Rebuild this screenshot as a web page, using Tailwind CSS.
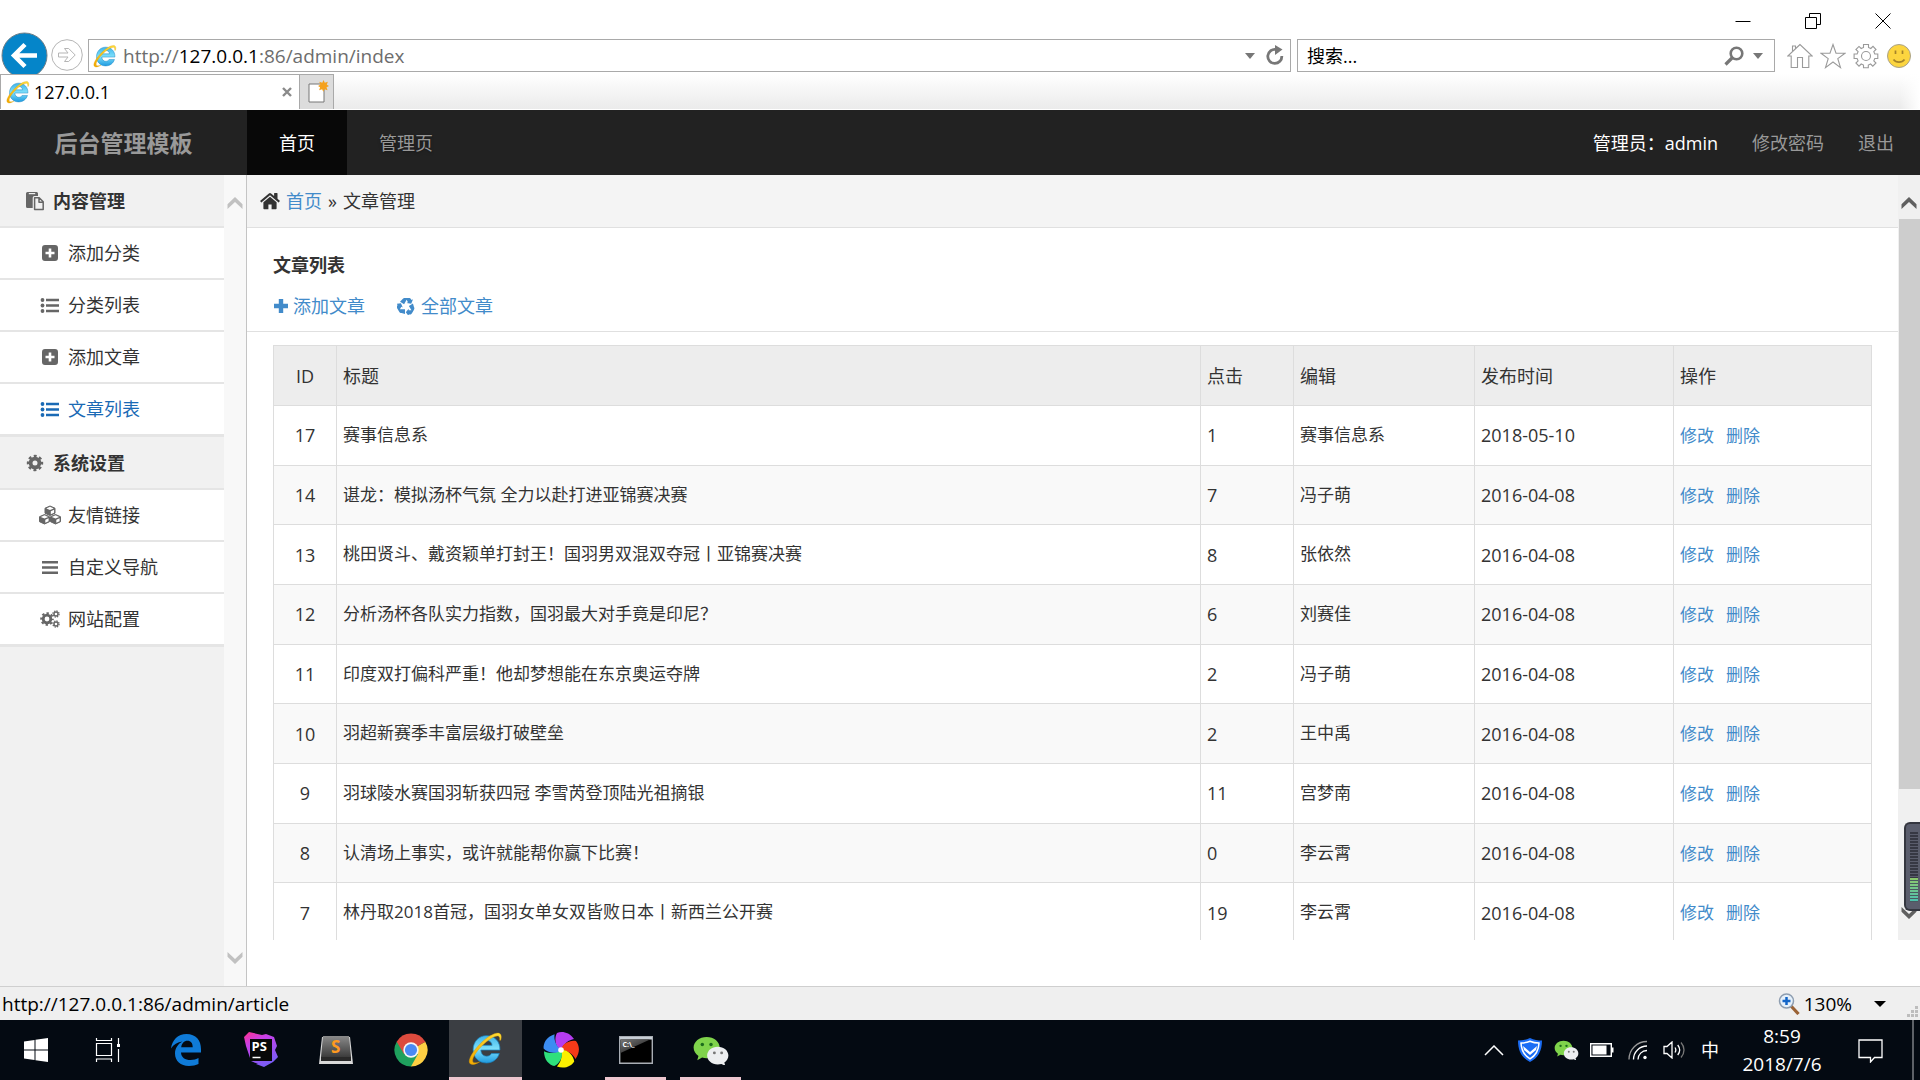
<!DOCTYPE html>
<html lang="zh-CN">
<head>
<meta charset="utf-8">
<title>127.0.0.1</title>
<meta name="viewport" content="width=device-width, initial-scale=1">
<script src="https://cdn.jsdelivr.net/npm/@tailwindcss/browser@4"></script>
</head>
<body class="flex h-screen flex-col overflow-hidden bg-white font-['Open_Sans','Noto_Sans_CJK_SC',sans-serif] text-lg text-[#333]">

<!-- Shared icons -->
<svg class="absolute size-0" aria-hidden="true">
  <defs>
    <linearGradient id="ieBlue" x1="0" y1="0" x2="0" y2="1"><stop offset="0" stop-color="#3fb4ea"/><stop offset=".5" stop-color="#7fe0fb"/><stop offset="1" stop-color="#1f9be0"/></linearGradient>
    <linearGradient id="ieGold" x1="0" y1="1" x2="1" y2="0"><stop offset="0" stop-color="#f3a900"/><stop offset="1" stop-color="#ffdf3a"/></linearGradient>
    <linearGradient id="psGrad" x1="0" y1="0" x2=".5" y2="1"><stop offset="0" stop-color="#ff318c"/><stop offset=".35" stop-color="#c840e8"/><stop offset="1" stop-color="#7b5cf5"/></linearGradient>
    <linearGradient id="sublime" x1="0" y1="0" x2="0" y2="1"><stop offset="0" stop-color="#8a8a8a"/><stop offset="1" stop-color="#3c3c3c"/></linearGradient>
    <linearGradient id="cmdGloss" x1="0" y1="0" x2="1" y2="1"><stop offset="0" stop-color="#777"/><stop offset="1" stop-color="#111"/></linearGradient>
  </defs>
  <symbol id="ie" viewBox="0 0 34 34">
    <path d="M31 18.500H12.500c.2 3.800 2.400 6 5.600 6 2.300 0 3.900-1 4.700-2.600h7.600C28.700 27.500 24 31 18 31 10.300 31 5 25.500 5 18S10.500 4.500 18 4.500 31.500 10 31 18.500zM12.700 13.900h10.700c-.3-2.900-2.200-4.700-5.200-4.700-3 0-5 1.800-5.500 4.700z" fill="url(#ieBlue)" stroke="#1b86c4" stroke-width=".7"/>
    <path d="M31.800 9c.9-3.200.6-5.500-1-6.500C27.600.6 19.500 4.800 12 12.300 4.500 19.800-.2 28 1.600 31.200c1.300 2.300 5 1.600 9.700-1.200-3.300 1.200-5.700 1.300-6.500 0-1.400-2.600 2.300-9.200 8.600-15.500C19.900 8 27.200 3.700 29.700 5c1 .5 1.400 1.900 1 3.900z" fill="url(#ieGold)" stroke="#d69600" stroke-width=".4"/>
  </symbol>
  <symbol id="plus-square" viewBox="0 0 18 18">
    <path fill-rule="evenodd" fill="currentColor" d="M4 1h10a3 3 0 0 1 3 3v10a3 3 0 0 1-3 3H4a3 3 0 0 1-3-3V4a3 3 0 0 1 3-3zm3.700 3.500v3.200H4.500v2.600h3.200v3.200h2.600v-3.200h3.200V7.700h-3.200V4.500z"/>
  </symbol>
  <symbol id="list" viewBox="0 0 20 18">
    <g fill="currentColor"><circle cx="2.500" cy="4" r="1.900"/><circle cx="2.500" cy="9.500" r="1.900"/><circle cx="2.500" cy="15" r="1.900"/><path d="M6 2.800h13v2.400H6zM6 8.300h13v2.400H6zM6 13.800h13v2.400H6z"/></g>
  </symbol>
  <symbol id="cog" viewBox="0 0 18 18">
    <circle cx="9" cy="9" r="4.400" fill="none" stroke="currentColor" stroke-width="3.800"/>
    <circle cx="9" cy="9" r="7" fill="none" stroke="currentColor" stroke-width="2.400" stroke-dasharray="2.950 2.548" stroke-dashoffset="1.475"/>
  </symbol>
  <symbol id="cogs" viewBox="0 0 20 18">
    <g fill="none" stroke="currentColor">
      <circle cx="7" cy="9" r="3.800" stroke-width="2.800"/><circle cx="7" cy="9" r="5.800" stroke-width="2" stroke-dasharray="2.400 2.155" stroke-dashoffset="1.200"/>
      <circle cx="16" cy="4" r="2" stroke-width="1.400"/><circle cx="16" cy="4" r="3.100" stroke-width="1.200" stroke-dasharray="1.400 1.035"/>
      <circle cx="16" cy="14" r="2" stroke-width="1.400"/><circle cx="16" cy="14" r="3.100" stroke-width="1.200" stroke-dasharray="1.400 1.035"/>
    </g>
  </symbol>
  <symbol id="cubes" viewBox="0 0 24 20">
    <g fill="currentColor" stroke="currentColor" stroke-width="1" stroke-linejoin="round">
      <path d="M12 1l5 2.200v5L12 10.500 7 8.200v-5z"/><path d="M6.500 9.500l5 2.200v5l-5 2.300-5-2.300v-5z"/><path d="M17.500 9.500l5 2.200v5l-5 2.300-5-2.300v-5z"/>
    </g>
    <g fill="#fff"><path d="M12 1.800l3.700 1.600L12 5 8.300 3.400zM12.800 6.200l3.300-1.500v3l-3.300 1.500zM6.500 10.300l3.700 1.600-3.700 1.600-3.700-1.600zM7.300 14.700l3.300-1.500v3l-3.300 1.500zM17.500 10.300l3.700 1.600-3.700 1.600-3.700-1.600zM18.300 14.700l3.300-1.500v3l-3.300 1.500z"/></g>
  </symbol>
  <symbol id="bars" viewBox="0 0 18 18"><path fill="currentColor" d="M1 3h16v2.500H1zM1 8.200h16v2.500H1zM1 13.400h16v2.500H1z"/></symbol>
  <symbol id="paste" viewBox="0 0 20 20">
    <path fill="currentColor" d="M1 2.500A1.500 1.500 0 0 1 2.500 1h9.200A1.500 1.500 0 0 1 13 2.500V5H9.500A1.800 1.800 0 0 0 7.700 6.800V17H2.500A1.500 1.500 0 0 1 1 15.500z"/>
    <path d="M3.800 2.600h6.400" stroke="#f1f1f1" stroke-width="1.200"/>
    <path d="M9.600 6.800h4.600l4 4v7.600H9.600zM14 7v4.200h4" fill="none" stroke="currentColor" stroke-width="1.500" stroke-linejoin="round"/>
  </symbol>
  <symbol id="home" viewBox="0 0 20 18">
    <path fill="currentColor" d="M10 4.800l6.600 5.500V16.500a.8.800 0 0 1-.8.800h-4.200v-4.900H8.400v4.900H4.200a.8.800 0 0 1-.8-.8v-6.200zM19.700 9.300l-.8 1a.4.400 0 0 1-.6 0L10 3.300 1.700 10.300a.4.400 0 0 1-.6 0l-.8-1a.4.400 0 0 1 0-.6L8.900 1.500a1.800 1.800 0 0 1 2.200 0l3 2.500V1.500c0-.3.200-.5.400-.5H17c.3 0 .5.200.5.500v5.200l2.300 2z"/>
  </symbol>
  <symbol id="plus" viewBox="0 0 16 16"><path fill="currentColor" d="M5.800 1h4.400v4.800H15v4.400h-4.800V15H5.800v-4.800H1V5.800h4.800z"/></symbol>
  <symbol id="recycle" viewBox="0 0 20 20">
    <g fill="currentColor"><path d="M6 2.600C6.800 1.300 7.600 1 9 1h4.200c1.200 0 1.900.5 2.400 1.400l.6 1 1.600-.9-2 4.900-5.100-.7 1.500-.9-1.500-2.700L7.900 8 3.400 5.400z"/></g>
    <g fill="currentColor" transform="rotate(120 10 10.500)"><path d="M6 2.600C6.800 1.300 7.600 1 9 1h4.200c1.200 0 1.900.5 2.400 1.400l.6 1 1.600-.9-2 4.900-5.100-.7 1.500-.9-1.500-2.700L7.900 8 3.400 5.400z"/></g>
    <g fill="currentColor" transform="rotate(240 10 10.500)"><path d="M6 2.600C6.800 1.300 7.600 1 9 1h4.200c1.200 0 1.900.5 2.400 1.400l.6 1 1.600-.9-2 4.900-5.100-.7 1.500-.9-1.500-2.700L7.900 8 3.400 5.400z"/></g>
  </symbol>
  <symbol id="chev-up" viewBox="0 0 16 14"><path fill="currentColor" d="M8 1l7.500 7.200V13L8 6 .5 13V8.200z"/></symbol>
  <symbol id="wechat" viewBox="0 0 38 30">
    <path d="M14.500 1C7 1 1 5.800 1 12c0 3.600 2 6.600 5 8.700L4.800 25l5-2.700c1.500.4 3 .7 4.700.7 7.500 0 13.500-4.900 13.500-11S22 1 14.500 1z" fill="#7fd34b"/>
    <circle cx="10" cy="8.700" r="1.800" fill="#1c6b1c"/><circle cx="19" cy="8.700" r="1.800" fill="#1c6b1c"/>
    <path d="M26 11c-6.200 0-11 4-11 9.200s4.800 9.200 11 9.200c1.300 0 2.600-.2 3.800-.5l4 2-1-3.400c2.500-1.700 4.200-4.300 4.200-7.300C37 15 32.200 11 26 11z" fill="#eceef0"/>
    <circle cx="22.500" cy="17.500" r="1.500" fill="#777"/><circle cx="30" cy="17.500" r="1.500" fill="#777"/>
  </symbol>
</svg>

<!-- Browser window controls -->
<div class="flex h-8 shrink-0 items-end justify-end pr-[2px]">
  <button class="flex w-[70px] justify-center pb-[3px]" aria-label="最小化"><svg class="size-4" viewBox="0 0 16 16"><path d="M.5 8.500h15" stroke="#000"/></svg></button>
  <button class="flex w-[70px] justify-center pb-[3px]" aria-label="还原"><svg class="size-4" viewBox="0 0 16 16" fill="none" stroke="#000"><path d="M.5 4.500h11v11H.5zM4.500 4V.5h11v11H12"/></svg></button>
  <button class="flex w-[70px] justify-center pb-[3px]" aria-label="关闭"><svg class="size-4" viewBox="0 0 16 16"><path d="M.5.5l15 15M15.500.5l-15 15" stroke="#000"/></svg></button>
</div>

<!-- Address bar -->
<div class="flex h-[42px] shrink-0 items-start overflow-hidden">
  <button class="ml-px w-[47px] shrink-0" aria-label="后退"><svg class="size-[47px]" viewBox="0 0 47 47"><circle cx="23.500" cy="23.500" r="22.500" fill="#0585c9" stroke="#6f7f88"/><path d="M36 23.500H15M24 12.500l-11 11 11 11" fill="none" stroke="#fff" stroke-width="4.500"/></svg></button>
  <button class="ml-[3px] mt-[7px] w-8 shrink-0" aria-label="前进"><svg class="size-8" viewBox="0 0 32 32"><circle cx="16" cy="16" r="15.300" fill="#fff" stroke="#b5b5b5"/><path d="M7.500 14v4h9.500l-3.500 4.500h4.200l6.500-6.500-6.500-6.500h-4.200L17 14z" fill="#fff" stroke="#b5b5b5"/></svg></button>
  <div class="ml-[5px] mt-[7px] flex h-[33px] flex-1 items-center border border-[#a9a9a9] pl-1 pr-1">
    <svg class="mr-[6px] size-6"><use href="#ie"/></svg>
    <p class="flex-1 text-[19px] leading-6 text-[#6d6d6d]">http://<span class="text-black">127.0.0.1</span>:86/admin/index</p>
    <button class="mr-[9px]" aria-label="历史记录"><svg class="h-[6px] w-[10px]" viewBox="0 0 10 6"><path d="M0 0h10L5 6z" fill="#777"/></svg></button>
    <button aria-label="刷新"><svg class="size-[22px]" viewBox="0 0 22 22"><path d="M12 4.500A7 7 0 1 0 17.800 11" fill="none" stroke="#777" stroke-width="2.800"/><path d="M11 0l7.500 4.500L11 10z" fill="#777"/></svg></button>
  </div>
  <div class="ml-[6px] mt-[7px] flex h-[33px] w-[478px] items-center border border-[#a9a9a9] pl-[9px] pr-[11px]">
    <input type="text" aria-label="搜索" placeholder="搜索..." class="min-w-0 flex-1 text-lg leading-6 text-black placeholder:text-black outline-none">
    <button class="mr-[9px]" aria-label="搜索"><svg class="size-5" viewBox="0 0 20 20" fill="none" stroke="#777"><circle cx="12.500" cy="7.500" r="5.800" stroke-width="2.600"/><path d="M8.500 11.500L1.500 18.500" stroke-width="3.200"/></svg></button>
    <button aria-label="搜索选项"><svg class="h-[6px] w-[10px]" viewBox="0 0 10 6"><path d="M0 0h10L5 6z" fill="#777"/></svg></button>
  </div>
  <div class="ml-3 mr-2 mt-[11px] flex gap-[7px]">
    <button aria-label="主页"><svg class="size-[26px]" viewBox="0 0 26 26" fill="none" stroke="#9a9a9a" stroke-width="1.100"><path d="M13 1.500L.8 13h3.400v11.500h6.300v-10h5v10h6.300V13h3.400zM5.500 8V3h3v2.500"/></svg></button>
    <button aria-label="收藏夹"><svg class="size-[26px]" viewBox="0 0 26 26" fill="none" stroke="#9a9a9a" stroke-width="1.100"><path d="M13 1.500l3 8.700h9l-7.200 5.400 2.700 9L13 19l-7.500 5.600 2.700-9L1 10.200h9z"/></svg></button>
    <button aria-label="工具"><svg class="size-[26px]" viewBox="0 0 26 26" fill="none" stroke="#9a9a9a" stroke-width="1.100"><circle cx="13" cy="13" r="4.500"/><path d="M10.500 1.500h5v3l2.300 1L20 3.400 23 6.500l-2.200 2.200 1 2.300h3v4.500h-3l-1 2.300 2.200 2.200-3.200 3.200-2.200-2.200-2.300 1v2.700h-4.800V22l-2.300-1L6 23.200 2.900 20l2.200-2.200-1-2.300h-3V11h3l1-2.300L2.900 6.500 6 3.400l2.200 2.100 2.300-1z"/></svg></button>
    <button aria-label="反馈"><svg class="size-[26px]" viewBox="0 0 26 26"><circle cx="13" cy="13" r="11.500" fill="#fcd53f" stroke="#a9a28a"/><path d="M9.500 7.500v3.500M16.500 7.500v3.500M7.500 16.500c2.500 3.500 8.500 3.500 11 0" fill="none" stroke="#a5842a" stroke-width="1.700"/></svg></button>
  </div>
</div>

<!-- Tab strip -->
<div class="mb-px flex h-[35px] shrink-0">
  <div class="flex w-[299px] items-center border-l border-t border-[#a9a9a9] bg-white pl-[5px] pr-[7px]">
    <svg class="mr-1 size-6"><use href="#ie"/></svg>
    <span class="flex-1 text-lg leading-6 text-black">127.0.0.1</span>
    <button aria-label="关闭标签页"><svg class="size-[10px]" viewBox="0 0 10 10"><path d="M1 1l8 8M9 1L1 9" stroke="#8a8a8a" stroke-width="2.400"/></svg></button>
  </div>
  <button class="flex w-[35px] items-center justify-center border border-b-0 border-[#a9a9a9] bg-[#dcdcdc]" aria-label="新建标签页"><svg class="size-6" viewBox="0 0 24 24"><path d="M4 4h15v18H4z" fill="#fff" stroke="#777"/><path d="M18.500 0l1.300 2.800 3-1-1 2.900L24 6l-2.500 1.300 1 3-3-1-1.200 2.400-1.200-2.500-3 1 1-3L13 6l2.300-1.300-1-2.900 3 1z" fill="#f5a11c"/></svg></button>
  <div class="flex flex-1 bg-linear-to-b from-white to-[#ebebeb]"><div class="ml-auto w-5 bg-linear-to-r from-white/0 to-white"></div></div>
</div>

<!-- Site header -->
<header class="flex h-[65px] shrink-0 items-center bg-[#222] text-[#999]">
  <h1 class="w-[247px] text-center text-[23px] leading-8 font-bold">后台管理模板</h1>
  <nav class="flex h-full flex-1">
    <a href="#" class="flex items-center bg-[#080808] px-8 text-white">首页</a>
    <a href="#" class="flex items-center px-8 text-shadow-md">管理页</a>
  </nav>
  <div class="flex gap-[34px] pr-[26px]">
    <span class="text-white">管理员：admin</span>
    <a href="#">修改密码</a>
    <a href="#">退出</a>
  </div>
</header>

<div class="flex min-h-0 flex-1">
  <!-- Sidebar -->
  <aside class="flex w-[247px] shrink-0 border-r border-[#c4c4c4] bg-[#f1f1f1]">
    <nav class="flex-1 text-[#333]">
      <h2 class="flex h-[53px] items-center border-b-2 border-[#e5e5e5] pl-[25px] font-bold"><svg class="mr-2 size-5 text-[#666]"><use href="#paste"/></svg>内容管理</h2>
      <ul class="border-b border-[#e5e5e5] [&_a]:flex [&_a]:h-[52px] [&_a]:items-center [&_a]:border-b-2 [&_a]:border-[#e5e5e5] [&_a]:bg-white [&_a]:pl-[38px] [&_svg]:mr-[6px] [&_svg]:w-6">
        <li><a href="#"><svg class="h-[18px] text-[#666]"><use href="#plus-square"/></svg>添加分类</a></li>
        <li><a href="#"><svg class="h-[18px] text-[#666]"><use href="#list"/></svg>分类列表</a></li>
        <li><a href="#"><svg class="h-[18px] text-[#666]"><use href="#plus-square"/></svg>添加文章</a></li>
        <li><a href="#" class="text-[#1a6ab5]"><svg class="h-[18px]"><use href="#list"/></svg>文章列表</a></li>
      </ul>
      <h2 class="flex h-[53px] items-center border-b-2 border-[#e5e5e5] pl-[25px] font-bold"><svg class="mr-2 h-[18px] w-5 text-[#666]"><use href="#cog"/></svg>系统设置</h2>
      <ul class="border-b border-[#e5e5e5] [&_a]:flex [&_a]:h-[52px] [&_a]:items-center [&_a]:border-b-2 [&_a]:border-[#e5e5e5] [&_a]:bg-white [&_a]:pl-[38px] [&_svg]:mr-[6px] [&_svg]:w-6">
        <li><a href="#"><svg class="h-5 text-[#666]"><use href="#cubes"/></svg>友情链接</a></li>
        <li><a href="#"><svg class="h-[18px] text-[#666]"><use href="#bars"/></svg>自定义导航</a></li>
        <li><a href="#"><svg class="h-[18px] text-[#666]"><use href="#cogs"/></svg>网站配置</a></li>
      </ul>
    </nav>
    <div class="flex w-[22px] flex-col items-center justify-between bg-[#f8f8f8] py-[21px] text-[#c1c1c1]">
      <svg class="h-[14px] w-4"><use href="#chev-up"/></svg>
      <svg class="h-[14px] w-4 rotate-180"><use href="#chev-up"/></svg>
    </div>
  </aside>

  <!-- Content -->
  <div class="flex min-w-0 flex-1 flex-col pb-[46px]">
    <div class="flex min-h-0 flex-1">
      <main class="min-w-0 flex-1 overflow-hidden">
        <div class="flex h-[53px] items-center gap-[6px] border-b border-[#e0e0e0] bg-[#f4f4f4] pl-[13px]">
          <svg class="h-[18px] w-5"><use href="#home"/></svg>
          <a href="#" class="text-[#428bca]">首页</a><span>»</span><span>文章管理</span>
        </div>
        <div class="border-b border-[#e0e0e0] px-[26px] pb-[5px] pt-4">
          <h3 class="flex h-[42px] items-center font-bold">文章列表</h3>
          <div class="flex h-10 items-center gap-8 text-[#428bca]">
            <a href="#" class="flex items-center gap-1"><svg class="size-4"><use href="#plus"/></svg>添加文章</a>
            <a href="#" class="flex items-center gap-[6px]"><svg class="size-[18px]"><use href="#recycle"/></svg>全部文章</a>
          </div>
        </div>
        <div class="px-[26px] pt-[13px]">
          <table class="h-[598px] w-full table-fixed border-collapse text-left [&_a]:text-[17px] [&_a]:text-[#428bca] [&_a]:mr-3 [&_td]:border [&_td]:border-[#ddd] [&_td]:px-[6px] [&_th]:h-[60px] [&_th]:border [&_th]:border-[#ddd] [&_th]:px-[6px] [&_th]:font-normal [&_tbody_tr:nth-child(even)]:bg-[#f9f9f9]">
            <colgroup><col class="w-[63px]"><col><col class="w-[93px]"><col class="w-[181px]"><col class="w-[199px]"><col class="w-[198px]"></colgroup>
            <thead class="bg-[#ededed]"><tr><th scope="col" class="text-center">ID</th><th scope="col">标题</th><th scope="col">点击</th><th scope="col">编辑</th><th scope="col">发布时间</th><th scope="col">操作</th></tr></thead>
            <tbody>
              <tr><td class="text-center">17</td><td class="text-[17px]">赛事信息系</td><td>1</td><td class="text-[17px]">赛事信息系</td><td>2018-05-10</td><td><a href="#">修改</a><a href="#">删除</a></td></tr>
              <tr><td class="text-center">14</td><td class="text-[17px]">谌龙：模拟汤杯气氛 全力以赴打进亚锦赛决赛</td><td>7</td><td class="text-[17px]">冯子萌</td><td>2016-04-08</td><td><a href="#">修改</a><a href="#">删除</a></td></tr>
              <tr><td class="text-center">13</td><td class="text-[17px]">桃田贤斗、戴资颖单打封王！国羽男双混双夺冠丨亚锦赛决赛</td><td>8</td><td class="text-[17px]">张依然</td><td>2016-04-08</td><td><a href="#">修改</a><a href="#">删除</a></td></tr>
              <tr><td class="text-center">12</td><td class="text-[17px]">分析汤杯各队实力指数，国羽最大对手竟是印尼？</td><td>6</td><td class="text-[17px]">刘赛佳</td><td>2016-04-08</td><td><a href="#">修改</a><a href="#">删除</a></td></tr>
              <tr><td class="text-center">11</td><td class="text-[17px]">印度双打偏科严重！他却梦想能在东京奥运夺牌</td><td>2</td><td class="text-[17px]">冯子萌</td><td>2016-04-08</td><td><a href="#">修改</a><a href="#">删除</a></td></tr>
              <tr><td class="text-center">10</td><td class="text-[17px]">羽超新赛季丰富层级打破壁垒</td><td>2</td><td class="text-[17px]">王中禹</td><td>2016-04-08</td><td><a href="#">修改</a><a href="#">删除</a></td></tr>
              <tr><td class="text-center">9</td><td class="text-[17px]">羽球陵水赛国羽斩获四冠 李雪芮登顶陆光祖摘银</td><td>11</td><td class="text-[17px]">宫梦南</td><td>2016-04-08</td><td><a href="#">修改</a><a href="#">删除</a></td></tr>
              <tr><td class="text-center">8</td><td class="text-[17px]">认清场上事实，或许就能帮你赢下比赛！</td><td>0</td><td class="text-[17px]">李云霄</td><td>2016-04-08</td><td><a href="#">修改</a><a href="#">删除</a></td></tr>
              <tr><td class="text-center">7</td><td class="text-[17px]">林丹取2018首冠，国羽女单女双皆败日本丨新西兰公开赛</td><td>19</td><td class="text-[17px]">李云霄</td><td>2016-04-08</td><td><a href="#">修改</a><a href="#">删除</a></td></tr>
            </tbody>
          </table>
        </div>
      </main>
      <div class="relative flex w-[22px] shrink-0 flex-col items-center bg-[#f0f0f0] pb-5 pt-[21px] text-[#606060]">
        <svg class="h-[14px] w-4 shrink-0"><use href="#chev-up"/></svg>
        <div class="mt-[9px] flex w-full flex-1 flex-col pl-px"><div class="h-[83%] bg-[#cdcdcd]"></div></div>
        <svg class="h-[14px] w-4 shrink-0 rotate-180"><use href="#chev-up"/></svg>
        <!-- Floating level meter -->
        <div class="absolute bottom-[29px] right-0 flex h-[89px] w-4 flex-col rounded-l-md border-2 border-r-0 border-[#34363f] bg-[#5a5d6c] pl-1 pr-[2px] pt-2">
          <div class="h-[46px] bg-[repeating-linear-gradient(#363843_0_2px,#5a5d6c_2px_3px)]"></div>
          <div class="h-6 bg-linear-to-b from-[#8cc96a] to-[#48c0b0]"><div class="h-full bg-[repeating-linear-gradient(transparent_0_2px,#4a5a60_2px_3px)]"></div></div>
        </div>
      </div>
    </div>
  </div>
</div>

<!-- Status bar -->
<div class="relative flex h-[34px] shrink-0 items-center justify-between border-t border-[#cfcfcf] bg-[#efefef] pl-[2px] pr-[34px] text-[19px] text-black">
  <span class="leading-6">http://127.0.0.1:86/admin/article</span>
  <button class="flex items-center leading-6"><svg class="mr-1 size-[22px]" viewBox="0 0 22 22"><path d="M13 13l7.500 8" stroke="#9a6235" stroke-width="3.200"/><circle cx="8.500" cy="8" r="7" fill="#e6f1fb" stroke="#8d9db0" stroke-width="1.500"/><path d="M8.500 4v8M4.500 8h8" stroke="#1466c8" stroke-width="2.500"/></svg>130%<svg class="ml-[22px] h-[6px] w-3" viewBox="0 0 12 6"><path d="M0 0h12L6 6z"/></svg></button>
  <svg class="absolute bottom-[2px] right-[2px] size-3" viewBox="0 0 12 12" fill="#bdbdbd"><path d="M9 0h3v3H9zM9 4h3v3H9zM5 4h3v3H5zM9 8h3v3H9zM5 8h3v3H5zM1 8h3v3H1z"/></svg>
</div>

<!-- Taskbar -->
<footer class="flex h-[60px] shrink-0 items-center bg-[#040a12] text-white">
  <button class="flex w-[72px] justify-center" aria-label="开始"><svg class="size-[26px]" viewBox="0 0 26 26" fill="#fff"><path d="M1 4.500l10.500-1.600v9.600H1zM12.500 2.700L25 1v11.500H12.500zM1 13.500h10.500v9.600L1 21.500zM12.500 13.500H25V25l-12.500-1.700z"/></svg></button>
  <button class="flex w-[72px] justify-center" aria-label="任务视图"><svg class="size-[26px]" viewBox="0 0 26 26" fill="none" stroke="#fff" stroke-width="1.200"><path d="M1.500 6.500h15v12h-15zM1.500 1v2.500h15V1M1.500 25v-3h15v3M23.500 1v6M23.500 12v13"/><path d="M22 7h3v3h-3z" fill="#fff" stroke="none"/></svg></button>
  <div class="ml-[5px] flex h-full gap-[2px] [&_button]:flex [&_button]:h-full [&_button]:w-[73px] [&_button]:items-center [&_button]:justify-center">
    <button aria-label="Edge"><svg class="size-8" viewBox="0 0 32 32"><path d="M1 14.500C2 6 8 0 16.500 0 26 0 31 6.500 31 15v3.500H11c.2 5 4.200 7.500 9.500 7.500 3 0 6-.8 8-2v6c-2.500 1.300-6 2-9.500 2C10.500 32 5 27 5 19.500c0-5.200 3-9.700 7.500-12C7.500 8 3.500 10.500 1 14.500zM11.200 13.200h11.500c0-4-1.800-6.400-5.300-6.400-3.300 0-5.600 2.600-6.200 6.400z" fill="#0f7bd8"/></svg></button>
    <button aria-label="PhpStorm"><svg class="size-9" viewBox="0 0 36 36"><path d="M6 0l13 3 4-1 8 3 3 9-2 4 3 7-5 5-9 5-8-3h2l-7-3-5-15-2-9z" fill="url(#psGrad)"/><path d="M7 7h22v22H7z" fill="#080808"/><path d="M9.500 25.500h8" stroke="#fff" stroke-width="1.500"/><text x="8.500" y="19" font-size="13" font-weight="700" fill="#fff">PS</text></svg></button>
    <button aria-label="Sublime Text"><svg class="h-[30px] w-[34px]" viewBox="0 0 34 30"><path d="M3 2h28l3 27H0z" fill="#d9d9d9"/><path d="M4 1h26l2 21H2z" fill="url(#sublime)"/><path d="M2 22h30v4H2z" fill="#292929"/><text x="12" y="18" font-size="17" font-weight="700" fill="#ff9a1f">S</text></svg></button>
    <button aria-label="Chrome"><svg class="size-[34px]" viewBox="0 0 34 34"><path d="M17 17L2.700 8.700A16.500 16.500 0 0 1 31.300 8.700z" fill="#dd4b3e"/><path d="M17 17L2.700 8.700A16.500 16.500 0 0 0 17 33.500z" fill="#1fa15d"/><path d="M17 17L17 33.500A16.500 16.500 0 0 0 31.300 8.700z" fill="#fecf43"/><path d="M17 9.300h14.600l-.3-.6L17 8 2.700 8.700 10 21z" fill="#dd4b3e"/><path d="M24 21l-7 12.500L10 21z" fill="#1fa15d"/><circle cx="17" cy="17" r="7.700" fill="#f5f5f5"/><circle cx="17" cy="17" r="6.100" fill="#4a8af4"/></svg></button>
    <button class="border-b-[3px] border-[#edc6cf] bg-[#3b3e43]" aria-label="Internet Explorer"><svg class="size-[35px]"><use href="#ie"/></svg></button>
    <button aria-label="浏览器"><svg class="size-9" viewBox="0 0 36 36"><g><path d="M18 18C12 15 11 6 14 1c5-2 12-1 17 6-5 1-10 4-13 11z" fill="#b63cf0"/><path transform="rotate(72 18 18)" d="M18 18C12 15 11 6 14 1c5-2 12-1 17 6-5 1-10 4-13 11z" fill="#f53a18"/><path transform="rotate(144 18 18)" d="M18 18C12 15 11 6 14 1c5-2 12-1 17 6-5 1-10 4-13 11z" fill="#fbf000"/><path transform="rotate(216 18 18)" d="M18 18C12 15 11 6 14 1c5-2 12-1 17 6-5 1-10 4-13 11z" fill="#2fe07c"/><path transform="rotate(288 18 18)" d="M18 18C12 15 11 6 14 1c5-2 12-1 17 6-5 1-10 4-13 11z" fill="#3c8df2"/></g><circle cx="18" cy="18" r="2.800" fill="#fff"/></svg></button>
    <button class="relative" aria-label="命令提示符"><svg class="h-[28px] w-[34px]" viewBox="0 0 34 28"><path d="M.7.700h32.600v26.600H.7z" fill="#000" stroke="#a9aeb5" stroke-width="1.400"/><path d="M1 1h32v2.500H1z" fill="#c7ced6"/><path d="M1.500 3.500H31L1.500 17z" fill="url(#cmdGloss)"/><text x="3.500" y="10.500" font-size="7" font-weight="700" fill="#fff">C:\_</text></svg><span class="absolute inset-x-[6px] bottom-0 h-[3px] bg-[#edc6cf]"></span></button>
    <button class="relative" aria-label="微信"><svg class="h-[29px] w-[38px]"><use href="#wechat"/></svg><span class="absolute inset-x-[6px] bottom-0 h-[3px] bg-[#edc6cf]"></span></button>
  </div>
  <div class="ml-auto flex h-full items-center">
    <button class="flex w-9 justify-center" aria-label="显示隐藏的图标"><svg class="h-[11px] w-5" viewBox="0 0 20 11"><path d="M1 10l9-9 9 9" fill="none" stroke="#fff" stroke-width="1.500"/></svg></button>
    <button class="flex w-9 justify-center" aria-label="电脑管家"><svg class="size-6" viewBox="0 0 24 24"><path d="M12 0c4 2 8 2.500 12 2.500C24 13 20 20 12 24 4 20 0 13 0 2.500 4 2.500 8 2 12 0z" fill="#1b6df5"/><path d="M12 3.200c3 1.300 6 1.800 9 1.900-.4 7.500-3.500 12.500-9 15.700C6.500 17.600 3.400 12.600 3 5.100c3-.1 6-.6 9-1.900z" fill="none" stroke="#fff" stroke-width="1.500"/><path d="M5 8l7 6 7-6-1 4-6 5-6-5z" fill="#fff"/></svg></button>
    <button class="flex w-9 justify-center" aria-label="微信"><svg class="h-5 w-[25px]"><use href="#wechat"/></svg></button>
    <button class="flex w-9 justify-center" aria-label="电池"><svg class="h-[14px] w-6" viewBox="0 0 24 14"><path d="M.7.700h20.600v12.600H.7z" fill="none" stroke="#fff" stroke-width="1.400"/><path d="M2.500 2.500h14v9h-14zM22 4.500h1.500v5H22z" fill="#fff"/></svg></button>
    <button class="flex w-9 justify-center" aria-label="网络"><svg class="size-5" viewBox="0 0 20 20" fill="none" stroke="#fff" stroke-width="1.300"><path d="M1 19.500A18 18 0 0 1 19 1.500" stroke="#999"/><path d="M5.500 19.500A13.500 13.500 0 0 1 19 6M10 19.500A9 9 0 0 1 19 10.500"/><circle cx="17" cy="17.500" r="1.700" fill="#fff" stroke="none"/></svg></button>
    <button class="flex w-9 justify-center" aria-label="音量"><svg class="h-[18px] w-[22px]" viewBox="0 0 22 18" fill="none" stroke="#fff" stroke-width="1.300"><path d="M1 5.500h3L9 1v16l-5-4.500H1zM12 6.500c1 1.500 1 3.500 0 5M14.700 4c2.400 3 2.400 7 0 10"/><path d="M18 1.500c4 4.500 4 10.500 0 15" stroke="#777"/></svg></button>
    <button class="w-9 text-center text-lg leading-6" aria-label="输入法">中</button>
    <time class="w-[108px] text-center text-[19px] leading-7" datetime="2018-07-06T08:59">8:59<br>2018/7/6</time>
    <button class="flex w-[68px] justify-center" aria-label="通知"><svg class="size-[25px]" viewBox="0 0 25 25"><path d="M1 2h23v17.500h-7.500L12.500 24v-4.500H1z" fill="none" stroke="#fff" stroke-width="1.300"/></svg></button>
    <button class="ml-2 h-full w-2 border-l-2 border-[#5d6167]" aria-label="显示桌面"></button>
  </div>
</footer>
</body>
</html>
